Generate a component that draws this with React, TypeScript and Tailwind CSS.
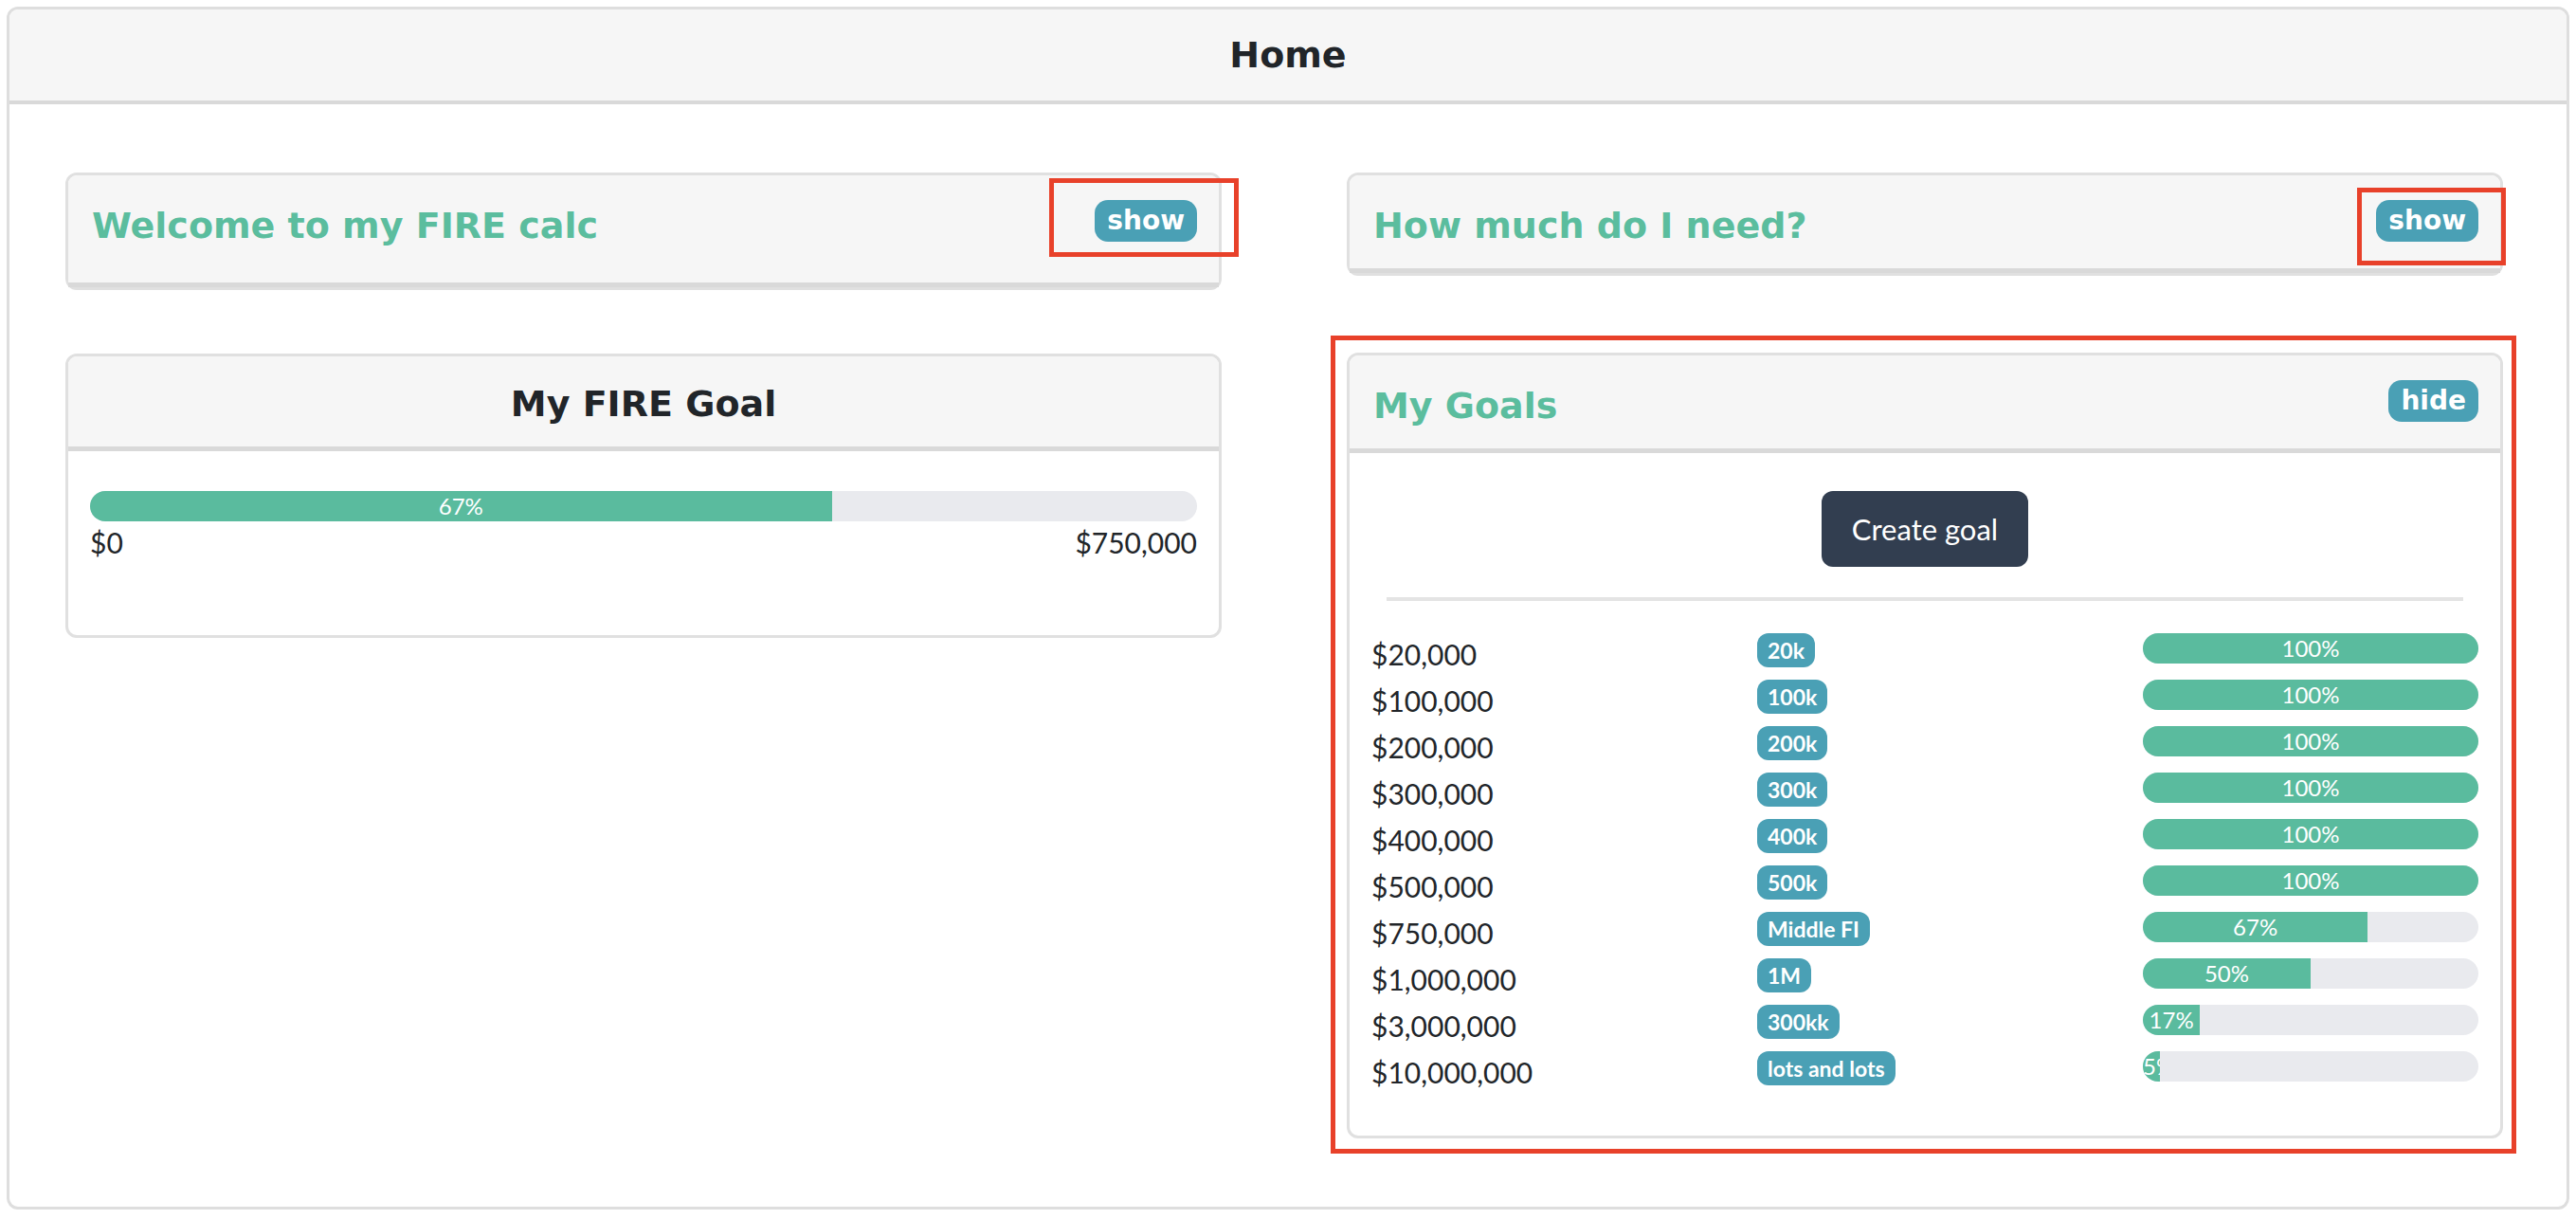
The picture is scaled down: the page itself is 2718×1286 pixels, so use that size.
import type { ReactNode } from 'react'

const heading = "font-['DejaVu_Sans',sans-serif] font-bold"
const body = "font-['Lato',sans-serif]"

const goals = [
  { amount: '$20,000', label: '20k', pct: 100 },
  { amount: '$100,000', label: '100k', pct: 100 },
  { amount: '$200,000', label: '200k', pct: 100 },
  { amount: '$300,000', label: '300k', pct: 100 },
  { amount: '$400,000', label: '400k', pct: 100 },
  { amount: '$500,000', label: '500k', pct: 100 },
  { amount: '$750,000', label: 'Middle FI', pct: 67 },
  { amount: '$1,000,000', label: '1M', pct: 50 },
  { amount: '$3,000,000', label: '300kk', pct: 17 },
  { amount: '$10,000,000', label: 'lots and lots', pct: 5 },
]

// red annotation boxes drawn over the screenshot
function Marker({ className }: { className: string }) {
  return <div className={`pointer-events-none absolute border-[5px] border-[#e8412a] ${className}`} />
}

function ToggleBadge({ text, marker }: { text: string; marker?: string }) {
  return (
    <div className="relative">
      <span
        className={`${heading} block h-[44px] rounded-[14px] bg-[#4aa0b5] px-[13px] text-[28px] leading-[44px] text-white`}
      >
        {text}
      </span>
      {marker && <Marker className={marker} />}
    </div>
  )
}

function Card({
  title,
  headerH,
  badge,
  marker,
  children,
}: {
  title: string
  headerH: string
  badge: string
  marker?: string
  children?: ReactNode
}) {
  return (
    <div className="rounded-[12px] border-[3px] border-[#e0e0e0] bg-white">
      <div
        className={`flex items-start justify-between rounded-t-[9px] border-b-[5px] border-[#d9d9d9] bg-[#f6f6f6] pt-[26px] pl-[25px] pr-[23px] ${headerH}`}
      >
        <h2 className={`${heading} mt-[5px] text-[38px] leading-[44px] text-[#5bbd9e]`}>{title}</h2>
        <ToggleBadge text={badge} marker={marker} />
      </div>
      {children}
    </div>
  )
}

function Progress({ pct }: { pct: number }) {
  return (
    <div className="h-[32px] w-full overflow-hidden rounded-full bg-[#e9eaee]">
      <div
        className={`${body} h-full overflow-hidden whitespace-nowrap bg-[#5abb9e] text-center text-[24px] leading-[32px] text-white`}
        style={{ width: `${pct}%` }}
      >
        {pct}%
      </div>
    </div>
  )
}

export default function App() {
  return (
    <div className="h-[1286px] w-[2718px] bg-white pt-[7px] pl-[7px]">
      <div className="h-[1269px] w-[2704px] rounded-[12px] border-[3px] border-[#dedede]">
        <div className="flex h-[100px] items-center justify-center rounded-t-[9px] border-b-4 border-[#d9d9d9] bg-[#f6f6f6]">
          <h1 className={`${heading} text-[38px] text-[#212529]`}>Home</h1>
        </div>

        <div className="flex gap-[132px] pt-[72px] pl-[59px]">
          {/* left column */}
          <div className="flex w-[1220px] flex-col">
            <Card
              title="Welcome to my FIRE calc"
              headerH="h-[118px]"
              badge="show"
              marker="-left-[48px] -top-[23px] -right-[44px] -bottom-[16px]"
            />

            <div className="mt-[67px] rounded-[12px] border-[3px] border-[#e0e0e0] bg-white">
              <div className="flex h-[100px] justify-center rounded-t-[9px] border-b-[5px] border-[#d9d9d9] bg-[#f6f6f6] pt-[26px]">
                <h2 className={`${heading} mt-[2px] text-[38px] leading-[44px] text-[#212529]`}>My FIRE Goal</h2>
              </div>
              <div className={`${body} h-[194px] px-[23px] pt-[42px] text-[30px] leading-[45px] text-[#212529]`}>
                <Progress pct={67} />
                <div className="flex justify-between">
                  <span>$0</span>
                  <span>$750,000</span>
                </div>
              </div>
            </div>
          </div>

          {/* right column */}
          <div className="flex w-[1220px] flex-col">
            <Card
              title="How much do I need?"
              headerH="h-[103px]"
              badge="show"
              marker="-left-[20px] -top-[13px] -right-[29px] -bottom-[25px]"
            />

            <div className="relative mt-[81px]">
              <Marker className="-left-[17px] -top-[18px] -right-[14px] -bottom-[16px]" />
              <Card title="My Goals" headerH="h-[103px]" badge="hide">
                <div className={`${body} px-[23px] pt-[40px] pb-[40px] text-[#212529]`}>
                  <div className="flex justify-center">
                    <button className="h-[80px] w-[218px] rounded-[12px] bg-[#323e50] text-[31px] text-white">
                      Create goal
                    </button>
                  </div>
                  <div className="mx-[16px] mt-[32px] h-[4px] bg-[#e4e4e4]" />
                  <div className="mt-[34px]">
                    {goals.map(g => (
                      <div key={g.amount} className="grid h-[49px] grid-cols-[407px_407px_1fr] items-start">
                        <span className="text-[30px] leading-[45px]">{g.amount}</span>
                        <span>
                          <span className="inline-block h-[36px] rounded-[12px] bg-[#4aa0b5] px-[11px] text-[23px] font-bold leading-[36px] text-white">
                            {g.label}
                          </span>
                        </span>
                        <Progress pct={g.pct} />
                      </div>
                    ))}
                  </div>
                </div>
              </Card>
            </div>
          </div>
        </div>
      </div>
    </div>
  )
}
